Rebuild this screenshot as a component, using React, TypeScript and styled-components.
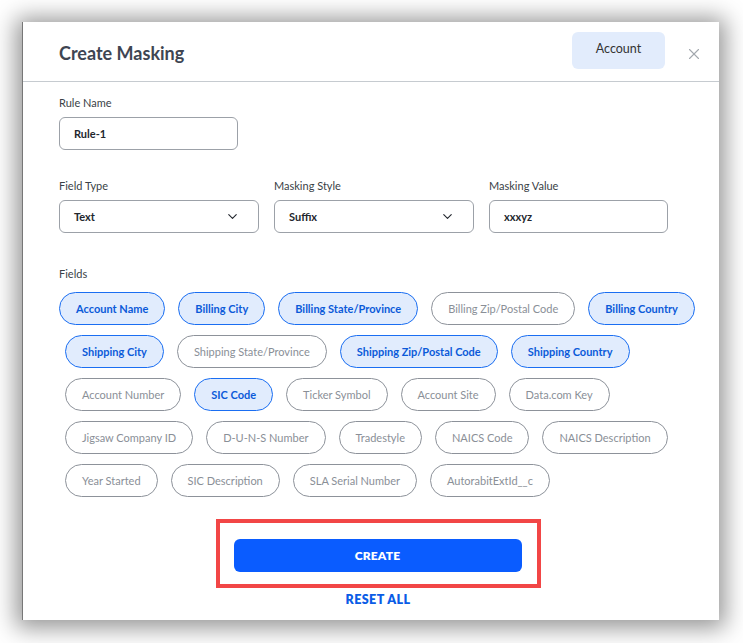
import React from "react";
import styled, { createGlobalStyle } from "styled-components";
import { ChevronDown, X } from "lucide-react";

const Global = createGlobalStyle`
  html, body { margin: 0; padding: 0; background: #ffffff; }
  body { font-family: Lato, "Open Sans", sans-serif; }
  * { box-sizing: border-box; }
`;

const Page = styled.div`
  padding: 22px 24px 23px 22px;
  width: 743px;
  height: 643px;
`;

const Panel = styled.div`
  width: 697px;
  height: 598px;
  background: #fff;
  border-left: 1px solid #777;
  box-shadow: 0 2px 22px 6px rgba(0, 0, 0, 0.42);
  display: flex;
  flex-direction: column;
`;

const Header = styled.div`
  height: 60px;
  border-bottom: 1px solid #c6cbd0;
  display: flex;
  align-items: center;
  padding: 0 16px 0 36px;
`;

const Title = styled.h1`
  margin: 0;
  flex: 1;
  font-size: 18px;
  font-weight: 700;
  color: #3e4552;
  padding-top: 2px;
`;

const TagButton = styled.button`
  width: 93px;
  height: 37px;
  border: none;
  border-radius: 6px;
  background: #e2ecfc;
  color: #333;
  font-family: Lato, sans-serif;
  font-size: 12.5px;
  padding: 0 0 4px;
  margin-right: 20px;
  margin-top: -2px;
`;

const Close = styled.div`
  display: flex;
  align-items: center;
  color: #a3a8ae;
  margin-top: 4px;
`;

const Body = styled.div`
  padding: 14px 22px 13px 36px;
  display: flex;
  flex-direction: column;
  flex: 1;
`;

const Label = styled.div<{ $mt?: number }>`
  font-size: 11px;
  line-height: 14px;
  color: #3a3f47;
  margin-top: ${(p) => p.$mt ?? 0}px;
  margin-bottom: 7px;
`;

const Row = styled.div`
  display: flex;
  gap: 15px;
`;

const Col = styled.div<{ $w: number }>`
  width: ${(p) => p.$w}px;
  display: flex;
  flex-direction: column;
`;

const Input = styled.div<{ $w?: number }>`
  width: ${(p) => (p.$w ? `${p.$w}px` : "100%")};
  height: 33px;
  border: 1px solid #9ca1a8;
  border-radius: 6px;
  display: flex;
  align-items: center;
  justify-content: space-between;
  padding: 0 18px 0 14px;
  font-size: 11px;
  font-weight: 700;
  color: #23272e;
`;

const Chips = styled.div`
  margin: 4px -10px 0 0;
  display: flex;
  flex-wrap: wrap;
  gap: 10px 13px;
  padding-left: 6px;
  & > :first-child { margin-left: -6px; }
`;

const Chip = styled.div<{ $on?: boolean }>`
  height: 33px;
  border-radius: 17px;
  padding: 0 16px;
  display: flex;
  align-items: center;
  font-size: 11px;
  font-weight: ${(p) => (p.$on ? 700 : 400)};
  color: ${(p) => (p.$on ? "#0b5ad9" : "#8a8f97")};
  background: ${(p) => (p.$on ? "#e1ecfd" : "#fff")};
  border: 1px solid ${(p) => (p.$on ? "#1a6ef2" : "#8d929a")};
  white-space: nowrap;
`;

const Footer = styled.div`
  margin-top: 22px;
  display: flex;
  flex-direction: column;
  align-items: center;
`;

const Highlight = styled.div`
  width: 325px;
  height: 69px;
  border: 4px solid #f24646;
  padding: 16px 15px 12px 14px;
`;

const CreateButton = styled.button`
  width: 288px;
  height: 33px;
  border: none;
  border-radius: 6px;
  background: #0a5cff;
  color: #fff;
  font-family: Lato, sans-serif;
  font-size: 12px;
  font-weight: 800;
  letter-spacing: 0.2px;
`;

const Reset = styled.div`
  margin-top: 5px;
  font-size: 12.5px;
  line-height: 14px;
  font-weight: 800;
  letter-spacing: 0.4px;
  color: #0a5ce6;
`;

const fields: [string, boolean][] = [
  ["Account Name", true],
  ["Billing City", true],
  ["Billing State/Province", true],
  ["Billing Zip/Postal Code", false],
  ["Billing Country", true],
  ["Shipping City", true],
  ["Shipping State/Province", false],
  ["Shipping Zip/Postal Code", true],
  ["Shipping Country", true],
  ["Account Number", false],
  ["SIC Code", true],
  ["Ticker Symbol", false],
  ["Account Site", false],
  ["Data.com Key", false],
  ["Jigsaw Company ID", false],
  ["D-U-N-S Number", false],
  ["Tradestyle", false],
  ["NAICS Code", false],
  ["NAICS Description", false],
  ["Year Started", false],
  ["SIC Description", false],
  ["SLA Serial Number", false],
  ["AutorabitExtId__c", false],
];

export default function App() {
  return (
    <>
      <Global />
      <Page>
        <Panel>
          <Header>
            <Title>Create Masking</Title>
            <TagButton>Account</TagButton>
            <Close>
              <X size={18} strokeWidth={1.5} />
            </Close>
          </Header>
          <Body>
            <Label>Rule Name</Label>
            <Input $w={179}>Rule-1</Input>
            <Row>
              <Col $w={200}>
                <Label $mt={29}>Field Type</Label>
                <Input>
                  Text
                  <ChevronDown size={15} strokeWidth={1.8} />
                </Input>
              </Col>
              <Col $w={200}>
                <Label $mt={29}>Masking Style</Label>
                <Input>
                  Suffix
                  <ChevronDown size={15} strokeWidth={1.8} />
                </Input>
              </Col>
              <Col $w={179}>
                <Label $mt={29}>Masking Value</Label>
                <Input>xxxyz</Input>
              </Col>
            </Row>
            <Label $mt={34}>Fields</Label>
            <Chips>
              {fields.map(([name, on]) => (
                <Chip key={name} $on={on}>
                  {name}
                </Chip>
              ))}
            </Chips>
            <Footer>
              <Highlight>
                <CreateButton>CREATE</CreateButton>
              </Highlight>
              <Reset>RESET ALL</Reset>
            </Footer>
          </Body>
        </Panel>
      </Page>
    </>
  );
}
